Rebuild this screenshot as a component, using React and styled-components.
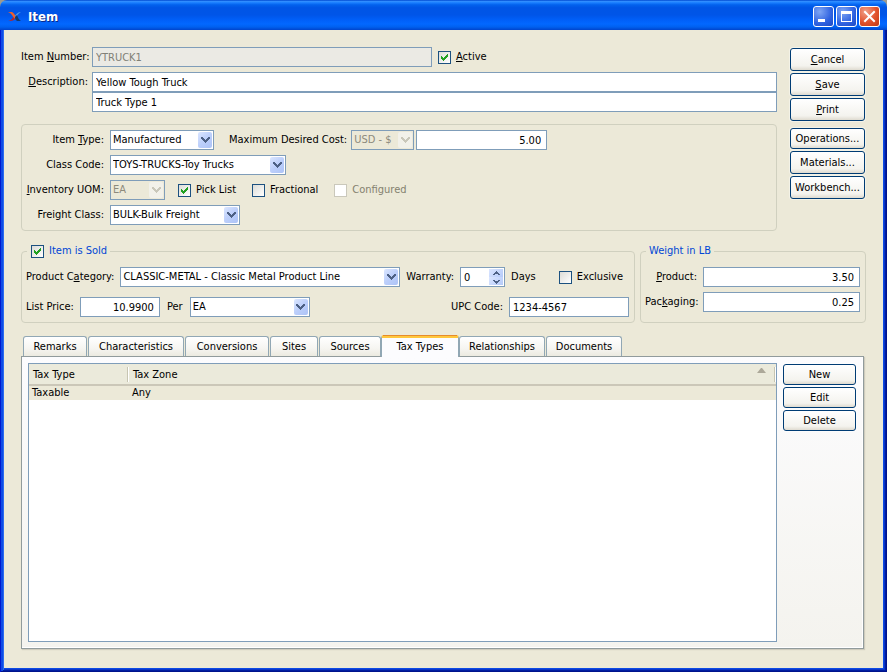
import React, { useState } from "react";
import styled, { createGlobalStyle, css } from "styled-components";

const TABS = [
    { name: "Remarks", width: 64 },
    { name: "Characteristics", width: 96 },
    { name: "Conversions", width: 84 },
    { name: "Sites", width: 48 },
    { name: "Sources", width: 62 },
    { name: "Tax Types", width: 78 },
    { name: "Relationships", width: 86 },
    { name: "Documents", width: 76 },
];

const Select = ({ id, label, value, width, grow, disabled }) => (
    <SelectWrap $width={width} $grow={grow}>
        <StyledSelect id={id} aria-label={label} defaultValue={value} disabled={disabled}>
            <option value={value}>{value}</option>
        </StyledSelect>
        <SelectArrow $disabled={disabled}>
            <svg width="9" height="6" viewBox="0 0 9 6" shapeRendering="crispEdges">
                <path
                    d="M0 0h2v1h1v1h1v1h1V2h1V1h1V0h2v2H8v1H7v1H6v1H5v1H4V5H3V4H2V3H1V2H0z"
                    fill="currentColor"
                />
            </svg>
        </SelectArrow>
    </SelectWrap>
);

const Check = ({ id, children, checked, disabled, tone }) => (
    <CheckLabel htmlFor={id} $disabled={disabled} $tone={tone}>
        <CheckSlot>
            <CheckBox id={id} type="checkbox" defaultChecked={checked} disabled={disabled} />
            <CheckMark width="7" height="7" viewBox="0 0 7 7" shapeRendering="crispEdges">
                <path
                    d="M0 2h1v1h1v1h1V3h1V2h1V1h1V0h1v3H6v1H5v1H4v1H3v1H2V6H1V5H0z"
                    fill="#21a121"
                />
            </CheckMark>
        </CheckSlot>
        <span>{children}</span>
    </CheckLabel>
);

const Spinner = ({ id, value, width }) => {
    const [count, setCount] = useState(value);

    return (
        <SpinWrap $width={width}>
            <Field
                id={id}
                type="number"
                value={count}
                onChange={(e) => setCount(Number(e.target.value))}
            />
            <SpinButtons>
                <SpinButton aria-label="Increase" onClick={() => setCount(count + 1)}>
                    <svg width="7" height="5" viewBox="0 0 7 5" shapeRendering="crispEdges">
                        <path d="M3 0h1v1h1v1h1v1h1v1H5V3H2v1H0V3h1V2h1V1h1z" fill="#4d6185" />
                    </svg>
                </SpinButton>
                <SpinButton aria-label="Decrease" onClick={() => setCount(Math.max(0, count - 1))}>
                    <svg width="7" height="5" viewBox="0 0 7 5" shapeRendering="crispEdges">
                        <path d="M3 5h1V4h1V3h1V2h1V1H5v1H2V1H0v1h1v1h1v1h1z" fill="#4d6185" />
                    </svg>
                </SpinButton>
            </SpinButtons>
        </SpinWrap>
    );
};

const App = () => {
    const [activeTab, setActiveTab] = useState("Tax Types");

    return (
        <>
            <GlobalStyle />
            <Window>
                <TitleBar>
                    <svg width="14" height="10" viewBox="0 0 14 10">
                        <path d="M0 0h4c2 1 3 3 4 5L6 7C5 4 3 1 0 0z" fill="#f0602c" />
                        <path d="M0 9c2 0 4-2 5-4l2 2C5 9 3 9 0 9z" fill="#b3262e" />
                        <path d="M13 0c-3 0-5 2-6 4l1 2c1-3 3-5 5-6z" fill="#4f93e0" />
                        <path d="M7 5l2-2c1 3 2 5 4 6H9C8 8 7 7 7 5z" fill="#123a6c" />
                    </svg>
                    <Title>Item</Title>
                    <Controls>
                        <ControlButton aria-label="Minimize">
                            <svg width="19" height="19" shapeRendering="crispEdges">
                                <rect x="4" y="12" width="7" height="3" fill="#fff" />
                            </svg>
                        </ControlButton>
                        <ControlButton aria-label="Maximize">
                            <svg width="19" height="19" shapeRendering="crispEdges">
                                <path d="M4 4h11v11H4zM5 7v7h9V7z" fill="#fff" fillRule="evenodd" />
                            </svg>
                        </ControlButton>
                        <ControlButton aria-label="Close" $danger>
                            <svg width="19" height="19">
                                <path d="M5 5l9 9M14 5l-9 9" stroke="#fff" strokeWidth="2" strokeLinecap="square" />
                            </svg>
                        </ControlButton>
                    </Controls>
                </TitleBar>

                <Client>
                    <Top>
                        <Details>
                            <HeaderGrid>
                                <Label htmlFor="number">Item <u>N</u>umber:</Label>
                                <Row>
                                    <NumberCell>
                                        <Field id="number" defaultValue="YTRUCK1" disabled />
                                    </NumberCell>
                                    <Check id="active" checked><u>A</u>ctive</Check>
                                </Row>
                                <Label htmlFor="description"><u>D</u>escription:</Label>
                                <Stack>
                                    <Field id="description" defaultValue="Yellow Tough Truck" />
                                    <Field aria-label="Description, second line" defaultValue="Truck Type 1" />
                                </Stack>
                            </HeaderGrid>

                            <Panel>
                                <Row>
                                    <Label htmlFor="type" $width={78}>Item <u>T</u>ype:</Label>
                                    <Select id="type" value="Manufactured" width={104} />
                                    <CostGroup>
                                        <Label htmlFor="cost">Maximum Desired Cost:</Label>
                                        <CostFields>
                                            <Select id="currency" label="Currency" value="USD - $" width={63} disabled />
                                            <Field id="cost" defaultValue="5.00" $width={131} $right />
                                        </CostFields>
                                    </CostGroup>
                                </Row>
                                <Row>
                                    <Label htmlFor="class" $width={78}>Class Code:</Label>
                                    <Select id="class" value="TOYS-TRUCKS-Toy Trucks" width={176} />
                                </Row>
                                <Row>
                                    <Label htmlFor="uom" $width={78}><u>I</u>nventory UOM:</Label>
                                    <Select id="uom" value="EA" width={55} disabled />
                                    <Checks>
                                        <Check id="pick" checked>Pick List</Check>
                                        <Check id="fractional">Fractional</Check>
                                        <Check id="configured" disabled>Configured</Check>
                                    </Checks>
                                </Row>
                                <Row>
                                    <Label htmlFor="freight" $width={78}>Freight Class:</Label>
                                    <Select id="freight" value="BULK-Bulk Freight" width={130} />
                                </Row>
                            </Panel>
                        </Details>

                        <SideButtons>
                            <Button><u>C</u>ancel</Button>
                            <Button><u>S</u>ave</Button>
                            <Button><u>P</u>rint</Button>
                            <Divider />
                            <Button $short>Operations...</Button>
                            <Button>Materials...</Button>
                            <Button>Workbench...</Button>
                        </SideButtons>
                    </Top>

                    <Groups>
                        <SoldGroup>
                            <Legend $wide>
                                <Check id="sold" checked tone="#0046d5">Item is Sold</Check>
                            </Legend>
                            <Row>
                                <Label htmlFor="category">Product C<u>a</u>tegory:</Label>
                                <Select id="category" value="CLASSIC-METAL - Classic Metal Product Line" grow />
                                <Label htmlFor="warranty">Warranty:</Label>
                                <Spinner id="warranty" value={0} width={45} />
                                <Text>Days</Text>
                                <ExclusiveCell>
                                    <Check id="exclusive">Exclusive</Check>
                                </ExclusiveCell>
                            </Row>
                            <Row>
                                <Label htmlFor="price">List Price:</Label>
                                <Field id="price" defaultValue="10.9900" $width={80} $right />
                                <PerLabel htmlFor="per">Per</PerLabel>
                                <Select id="per" value="EA" width={120} />
                                <Spacer />
                                <Label htmlFor="upc">UPC Code:</Label>
                                <Field id="upc" defaultValue="1234-4567" $width={120} />
                            </Row>
                        </SoldGroup>

                        <WeightGroup>
                            <Legend>Weight in LB</Legend>
                            <Row>
                                <Label htmlFor="product" $width={52}><u>P</u>roduct:</Label>
                                <Field id="product" defaultValue="3.50" $right />
                            </Row>
                            <Row>
                                <Label htmlFor="packaging" $width={52}>Pac<u>k</u>aging:</Label>
                                <Field id="packaging" defaultValue="0.25" $right />
                            </Row>
                        </WeightGroup>
                    </Groups>

                    <TabList role="tablist">
                        {TABS.map((tab) => (
                            <Tab
                                key={tab.name}
                                role="tab"
                                aria-selected={tab.name === activeTab}
                                $active={tab.name === activeTab}
                                $width={tab.width}
                                onClick={() => setActiveTab(tab.name)}
                            >
                                {tab.name}
                            </Tab>
                        ))}
                    </TabList>

                    <TabPanel role="tabpanel">
                        <TableFrame>
                            <Table>
                                <thead>
                                    <tr>
                                        <HeadCell $width={100}>Tax Type</HeadCell>
                                        <HeadCell>
                                            <HeadInner>
                                                Tax Zone
                                                <svg width="9" height="5" viewBox="0 0 9 5">
                                                    <path d="M4 0h1l4 5H0z" fill="#aca899" />
                                                </svg>
                                            </HeadInner>
                                        </HeadCell>
                                    </tr>
                                </thead>
                                <tbody>
                                    <tr>
                                        <Cell>Taxable</Cell>
                                        <Cell>Any</Cell>
                                    </tr>
                                </tbody>
                            </Table>
                        </TableFrame>
                        <TableButtons>
                            <Button $short>New</Button>
                            <Button $short>Edit</Button>
                            <Button $short>Delete</Button>
                        </TableButtons>
                    </TabPanel>
                </Client>
            </Window>
        </>
    );
};

export default App;

const GlobalStyle = createGlobalStyle`
  * {
    box-sizing: border-box;
  }

  body {
    margin: 0;
    background: #9d9a8e;
    color: #000;
    font-family: "DejaVu Sans Condensed", "DejaVu Sans", sans-serif;
    font-size: 11px;
    line-height: 14px;
  }

  input, select, button {
    font: inherit;
    color: inherit;
    margin: 0;
  }

  u {
    text-underline-offset: 1px;
    text-decoration-thickness: 1px;
    text-decoration-skip-ink: none;
  }
`;

const Window = styled.div`
  display: flex;
  flex-direction: column;
  min-height: 100vh;
`;

const TitleBar = styled.header`
  display: flex;
  align-items: center;
  height: 30px;
  padding: 3px 7px 0 8px;
  border-radius: 7px 7px 0 0;
  background: linear-gradient(
    to bottom,
    #0048d0 0%,
    #2f8dff 5%,
    #1a7fff 9%,
    #0262ee 16%,
    #0055e5 26%,
    #0055e8 50%,
    #005ff8 66%,
    #0268ff 80%,
    #0060ef 90%,
    #0044cc 100%
  );
`;

const Title = styled.h1`
  flex: 1;
  margin: 0 0 0 6px;
  font-size: 13px;
  line-height: 16px;
  font-weight: bold;
  color: #fff;
  text-shadow: 1px 1px 0 #0a2a8c;
`;

const Controls = styled.div`
  display: flex;
  gap: 2px;
`;

const ControlButton = styled.button`
  width: 21px;
  height: 21px;
  padding: 0;
  border: 1px solid #fff;
  border-radius: 3px;
  background: ${({ $danger }) =>
        $danger
            ? "radial-gradient(circle at 30% 25%, #f0a088, #e2522c 55%, #c03a14)"
            : "radial-gradient(circle at 30% 25%, #7fa6f4, #2f62e0 60%, #1c49c4)"};

  svg {
    display: block;
  }
`;

const Client = styled.main`
  flex: 1;
  display: flex;
  flex-direction: column;
  padding: 17px 21px 23px;
  background: #ece9d8;
  box-shadow:
    inset 1px 0 0 #0019cf,
    inset -1px -1px 0 #00138c,
    inset 3px 0 0 #0f4be6,
    inset -2px -2px 0 #001ea0,
    inset 4px 0 0 #2a6cf0,
    inset -3px -3px 0 #0a35c8,
    inset -4px -4px 0 #0d4ae4;
`;

const Top = styled.div`
  display: flex;
  gap: 13px;
`;

const Details = styled.div`
  flex: 1;
  min-width: 0;
`;

const HeaderGrid = styled.div`
  display: grid;
  grid-template-columns: 67px 1fr;
  gap: 5px 4px;
  margin-bottom: 12px;

  > label {
    line-height: 20px;
  }
`;

const Row = styled.div`
  display: flex;
  align-items: center;
  gap: 6px;
`;

const Stack = styled.div`
  display: flex;
  flex-direction: column;
`;

const NumberCell = styled.div`
  flex: 0 1 340px;
`;

const Label = styled.label`
  flex: none;
  display: block;
  width: ${({ $width }) => ($width ? `${$width}px` : "auto")};
  text-align: right;
  white-space: nowrap;
`;

const PerLabel = styled(Label)`
  padding: 0 1px;
`;

const Text = styled.span`
  white-space: nowrap;
`;

const Field = styled.input`
  width: ${({ $width }) => ($width ? `${$width}px` : "100%")};
  min-width: 0;
  height: 20px;
  padding: 0 ${({ $right }) => ($right ? "5px" : "3px")} 0 3px;
  border: 1px solid #7f9db9;
  border-radius: 0;
  background: #fff;
  text-align: ${({ $right }) => ($right ? "right" : "left")};

  &:disabled {
    background: #ebeae4;
    color: #808076;
  }

  &:focus {
    outline: none;
  }
`;

const SelectWrap = styled.div`
  position: relative;
  ${({ $grow, $width }) => ($grow ? "flex: 1; min-width: 0;" : `flex: none; width: ${$width}px;`)}
`;

const StyledSelect = styled.select`
  appearance: none;
  display: block;
  width: 100%;
  height: 20px;
  padding: 0 18px 0 2px;
  border: 1px solid #7f9db9;
  border-radius: 0;
  background: #fff;

  &:disabled {
    background: #ece9d8;
    color: #8d8a7c;
    opacity: 1;
  }
`;

const SelectArrow = styled.span`
  position: absolute;
  top: 2px;
  right: 2px;
  width: 14px;
  height: 16px;
  display: flex;
  align-items: center;
  justify-content: center;
  border-radius: 2px;
  pointer-events: none;
  color: ${({ $disabled }) => ($disabled ? "#c9c7ba" : "#4d6185")};
  background: ${({ $disabled }) =>
        $disabled ? "#f2f1ea" : "linear-gradient(135deg, #dbe6ff, #bccffb 50%, #adc3f6)"};
`;

const CheckLabel = styled.label`
  display: inline-flex;
  align-items: center;
  gap: 5px;
  white-space: nowrap;
  color: ${({ $disabled, $tone }) => ($disabled ? "#84816f" : $tone || "inherit")};
`;

const CheckSlot = styled.span`
  position: relative;
  flex: none;
  width: 13px;
  height: 13px;
`;

const CheckMark = styled.svg`
  position: absolute;
  top: 3px;
  left: 3px;
  display: none;
  pointer-events: none;
`;

const CheckBox = styled.input`
  appearance: none;
  display: block;
  width: 13px;
  height: 13px;
  border: 1px solid #1c5180;
  background: linear-gradient(135deg, #dcdcd7, #fff);

  &:checked + ${CheckMark} {
    display: block;
  }

  &:disabled {
    border-color: #cac8bb;
    background: #fff;
  }
`;

const Panel = styled.section`
  display: flex;
  flex-direction: column;
  gap: 5px;
  padding: 5px 4px;
  border: 1px solid #d0d0bf;
  border-radius: 4px;
`;

const CostGroup = styled.div`
  display: flex;
  align-items: center;
  gap: 4px;
  margin-left: 9px;
`;

const CostFields = styled.div`
  display: flex;
  gap: 2px;
`;

const Checks = styled.div`
  display: flex;
  gap: 16px;
  margin-left: 7px;
`;

const SideButtons = styled.div`
  display: flex;
  flex-direction: column;
  gap: 2px;
  width: 76px;
  padding: 1px 1px 0 0;
`;

const Divider = styled.div`
  height: 3px;
`;

const Button = styled.button`
  height: ${({ $short }) => ($short ? "21px" : "23px")};
  padding: 1px 0 0;
  border: 1px solid #003c74;
  border-radius: 3px;
  background: linear-gradient(#fff, #f4f3ee 80%, #dfdbd0);
  box-shadow: 0 0 0 1px rgba(255, 255, 255, 0.4);
  white-space: nowrap;

  &:active {
    background: #e3e1d9;
  }
`;

const Groups = styled.div`
  display: flex;
  gap: 5px;
  margin-top: 13px;
`;

const groupBox = css`
  min-width: 0;
  margin: 0;
  border: 1px solid #d0d0bf;
  border-radius: 4px;
`;

const SoldGroup = styled.fieldset`
  ${groupBox}
  flex: 1;
  padding: 9px 5px 5px 4px;

  > div + div {
    margin-top: 10px;
  }
`;

const WeightGroup = styled.fieldset`
  ${groupBox}
  width: 226px;
  padding: 9px 5px 5px 4px;

  > div + div {
    margin-top: 5px;
  }
`;

const Legend = styled.legend`
  height: 14px;
  margin-left: 1px;
  padding: 0 3px 0 ${({ $wide }) => ($wide ? "4px" : "3px")};
  color: #0046d5;
`;

const ExclusiveCell = styled.div`
  display: flex;
  margin-left: auto;
  padding: 0 6px 0 17px;
`;

const Spacer = styled.div`
  flex: 1;
`;

const SpinWrap = styled.div`
  position: relative;
  flex: none;
  width: ${({ $width }) => $width}px;

  input {
    display: block;
    appearance: textfield;
  }

  input::-webkit-inner-spin-button {
    display: none;
  }
`;

const SpinButtons = styled.div`
  position: absolute;
  top: 2px;
  right: 2px;
  display: flex;
  flex-direction: column;
`;

const SpinButton = styled.button`
  display: flex;
  align-items: center;
  justify-content: center;
  width: 14px;
  height: 8px;
  padding: 0;
  border: 0;
  background: linear-gradient(135deg, #dbe6ff, #b5caf9);
`;

const TabList = styled.div`
  display: flex;
  align-items: flex-end;
  gap: 1px;
  margin-top: 12px;
  padding-left: 2px;
`;

const Tab = styled.button`
  position: relative;
  width: ${({ $width }) => $width}px;
  height: 20px;
  padding: 1px 0 0;
  border: 1px solid #91a7b4;
  border-bottom: 0;
  border-radius: 3px 3px 0 0;
  background: linear-gradient(#fff, #f6f5f1 60%, #eceae0);
  white-space: nowrap;

  ${({ $active }) =>
        $active &&
        css`
      z-index: 1;
      height: 22px;
      margin: 0 -1px -1px;
      padding: 0 0 1px;
      border-top: 3px solid #ffc73c;
      background: #fcfcfe;

      &::before {
        content: "";
        position: absolute;
        top: -3px;
        left: 1px;
        right: 1px;
        height: 1px;
        background: #e68b2c;
      }
    `}
`;

const TabPanel = styled.section`
  flex: 1;
  display: flex;
  gap: 6px;
  margin-right: 2px;
  padding: 6px 7px 6px 6px;
  border: 1px solid #919b9c;
  background: linear-gradient(#fcfcfe, #f4f3ee);
  box-shadow: inset -1px -1px 0 #fff, 1px 1px 1px #cfccbd;
`;

const TableFrame = styled.div`
  flex: 1;
  border: 1px solid #7f9db9;
  background: #fff;
`;

const Table = styled.table`
  width: 100%;
  table-layout: fixed;
  border-collapse: separate;
  border-spacing: 0;
`;

const HeadCell = styled.th`
  width: ${({ $width }) => ($width ? `${$width}px` : "auto")};
  height: 22px;
  padding: 1px 0 0;
  border-bottom: 2px solid #cbc7b8;
  background:
    linear-gradient(#c7c5b2, #c7c5b2) right 1px top 3px / 1px 15px no-repeat,
    linear-gradient(#fff, #fff) right 0 top 3px / 1px 15px no-repeat,
    #ebeadb;
  font-weight: normal;
  text-align: left;
  text-indent: 4px;
`;

const HeadInner = styled.span`
  display: flex;
  justify-content: space-between;
  padding-right: 10px;
`;

const Cell = styled.td`
  height: 14px;
  padding: 0 3px;
  background: #ece9d8;
`;

const TableButtons = styled.div`
  display: flex;
  flex-direction: column;
  gap: 2px;
  width: 73px;
  padding-top: 1px;
`;
